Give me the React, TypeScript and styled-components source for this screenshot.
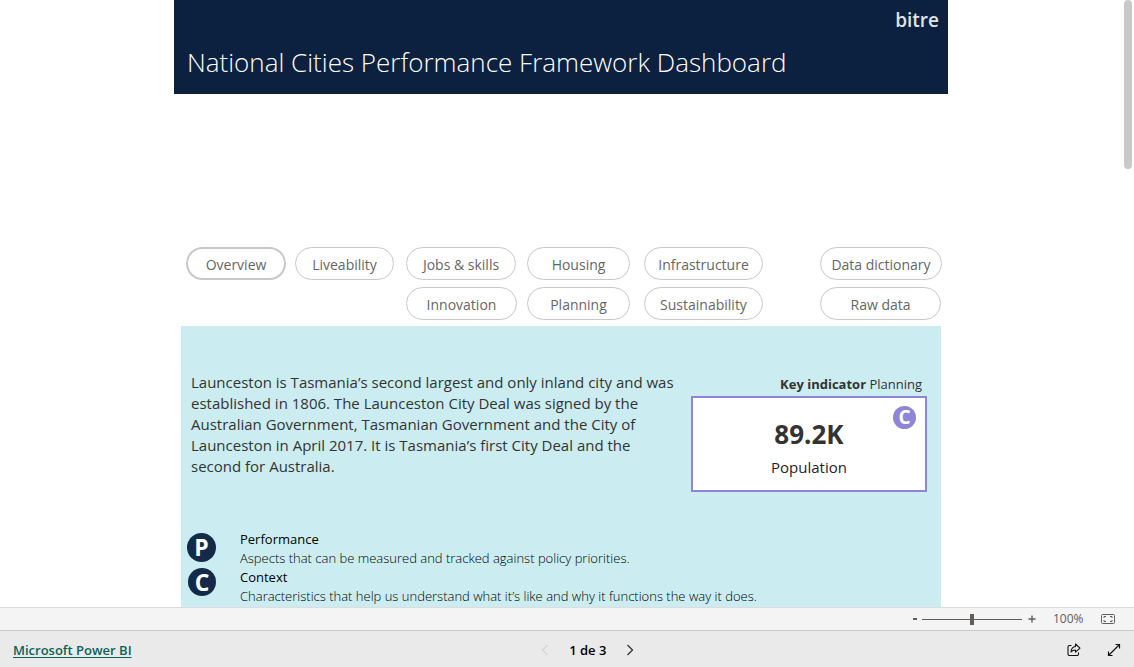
import React, { useState } from "react";
import styled, { createGlobalStyle } from "styled-components";

const GlobalStyle = createGlobalStyle`
  *, *::before, *::after { box-sizing: border-box; }
  body {
    margin: 0;
    background: #fff;
    color: #252423;
    font-family: "Open Sans", "Noto Sans", sans-serif;
  }
  button, input { font: inherit; }
  h1, p, dl, dt, dd { margin: 0; }
`;

const Shell = styled.div`
  display: flex;
  flex-direction: column;
  height: 100vh;
`;

const Viewport = styled.main`
  position: relative;
  flex: 1;
  min-height: 0;
  display: flex;
  overflow: hidden;
  padding-right: 12px;
`;

const ScrollThumb = styled.div`
  position: absolute;
  top: 0;
  right: 2px;
  width: 8px;
  height: 169px;
  border-radius: 4px;
  background: #c8c8c8;
`;

const Report = styled.div`
  display: flex;
  flex-direction: column;
  width: 100%;
  max-width: 774px;
  margin: 0 auto;
`;

const Banner = styled.header`
  display: flex;
  flex-direction: column;
  flex-shrink: 0;
  padding: 6px 9px 12px 13px;
  background: #0b213f;
  color: #fff;
`;

const Brand = styled.span`
  align-self: flex-end;
  font-size: 19px;
  line-height: 28px;
  font-weight: 600;
  color: #dfe3e9;
`;

const Title = styled.h1`
  padding-top: 8px;
  font-size: 26px;
  line-height: 40px;
  font-weight: 300;
`;

const Tabs = styled.nav`
  display: grid;
  grid-template-columns: 109fr 111fr 121fr 117fr 176fr 122fr;
  row-gap: 7px;
  flex-shrink: 0;
  padding: 153px 6px 6px 12px;
`;

const Tab = styled.button<{ $width: number; $column: number; $active?: boolean }>`
  grid-column: ${(p) => p.$column};
  width: ${(p) => p.$width}px;
  height: 33px;
  padding: 2px 0 0;
  border: ${(p) => (p.$active ? 2 : 1)}px solid #c8c8c8;
  border-radius: 17px;
  background: #fff;
  color: #666;
  font-size: 14px;
  line-height: 20px;
  white-space: nowrap;
`;

const Panel = styled.section`
  flex: 1;
  margin: 0 7px;
  padding: 46px 14px 0 6px;
  background: #cbedf2;
`;

const Summary = styled.div`
  display: flex;
  justify-content: space-between;
  padding-left: 4px;
`;

const Intro = styled.p`
  width: 492px;
  font-size: 15px;
  line-height: 21px;
  color: #333;
`;

const Indicator = styled.div`
  width: 236px;
`;

const IndicatorLabel = styled.p`
  padding-right: 5px;
  text-align: right;
  font-size: 13px;
  line-height: 24px;
  color: #333;
`;

const Card = styled.div`
  position: relative;
  display: flex;
  flex-direction: column;
  align-items: center;
  height: 96px;
  padding-top: 18px;
  border: 2px solid #8f85d6;
  background: #fff;
`;

const Value = styled.strong`
  font-size: 26px;
  line-height: 36px;
  color: #333;
`;

const Caption = styled.span`
  font-size: 15px;
  line-height: 30px;
  color: #252423;
`;

const Disc = styled.span<{ $size: number; $font: number; $fill: string }>`
  display: flex;
  align-items: center;
  justify-content: center;
  width: ${(p) => p.$size}px;
  height: ${(p) => p.$size}px;
  border-radius: 50%;
  background: ${(p) => p.$fill};
  color: #fff;
  font-size: ${(p) => p.$font}px;
  line-height: ${(p) => p.$size}px;
  font-weight: 700;
`;

const Badge = styled(Disc)`
  position: absolute;
  top: 8px;
  right: 9px;
`;

const Legend = styled.div`
  display: flex;
  gap: 24px;
  padding-top: 38px;
`;

const Markers = styled.div`
  display: flex;
  flex-direction: column;
  align-items: flex-end;
  gap: 6px;
  padding-top: 3px;
`;

const Terms = styled.dl`
  font-size: 13px;
  line-height: 19px;
  color: #000;
`;

const Term = styled.dt`
  font-weight: 400;
`;

const Meaning = styled.dd`
  font-weight: 300;
`;

const ZoomBar = styled.div`
  display: flex;
  align-items: center;
  justify-content: flex-end;
  flex-shrink: 0;
  height: 23px;
  padding-right: 18px;
  border-top: 1px solid #dcdcdc;
  background: #f4f4f4;
  color: #605e5c;
`;

const BareButton = styled.button`
  display: flex;
  align-items: center;
  justify-content: center;
  padding: 0;
  border: 0;
  background: none;
  color: inherit;
`;

const StepButton = styled(BareButton)`
  width: 14px;
  height: 22px;
`;

const Slider = styled.input`
  appearance: none;
  width: 100px;
  height: 12px;
  margin: 0 3px 0 0;
  background: linear-gradient(#605e5c, #605e5c) center / 100% 1px no-repeat;
  &::-webkit-slider-thumb {
    appearance: none;
    width: 4px;
    height: 11px;
    background: #605e5c;
  }
`;

const Percent = styled.output`
  width: 30px;
  margin: 0 17px 0 14px;
  font-size: 12px;
  line-height: 22px;
  white-space: nowrap;
`;

const Footer = styled.footer`
  display: flex;
  align-items: center;
  justify-content: space-between;
  flex-shrink: 0;
  height: 37px;
  padding: 2px 0 0 13px;
  border-top: 1px solid #c8c8c8;
  background: #eaeaea;
`;

const BrandLink = styled.a`
  font-size: 13px;
  line-height: 20px;
  font-weight: 600;
  color: #0b6258;
  text-underline-offset: 2px;
`;

const Pager = styled.div`
  display: flex;
  align-items: center;
  gap: 17px;
  font-size: 13px;
  line-height: 20px;
  font-weight: 600;
  color: #000;
`;

const PageButton = styled(BareButton)`
  width: 14px;
  height: 20px;
  color: #333;
  &:disabled { color: #c8c6c4; }
`;

const Actions = styled.div`
  display: flex;
  padding-left: 10px;
`;

const ActionButton = styled(BareButton)`
  width: 40px;
  height: 32px;
  color: #111;
`;

const tabs = [
  { label: "Overview", column: 1, width: 100, active: true },
  { label: "Liveability", column: 2, width: 99 },
  { label: "Jobs & skills", column: 3, width: 110 },
  { label: "Housing", column: 4, width: 103 },
  { label: "Infrastructure", column: 5, width: 119 },
  { label: "Data dictionary", column: 6, width: 122 },
  { label: "Innovation", column: 3, width: 111 },
  { label: "Planning", column: 4, width: 103 },
  { label: "Sustainability", column: 5, width: 119 },
  { label: "Raw data", column: 6, width: 121 },
];

export default function App() {
  const [zoom, setZoom] = useState(100);
  return (
    <Shell>
      <GlobalStyle />
      <Viewport>
        <Report>
          <Banner>
            <Brand>bitre</Brand>
            <Title>National Cities Performance Framework Dashboard</Title>
          </Banner>
          <Tabs aria-label="Report pages">
            {tabs.map((t) => (
              <Tab key={t.label} type="button" $column={t.column} $width={t.width} $active={t.active}>
                {t.label}
              </Tab>
            ))}
          </Tabs>
          <Panel>
            <Summary>
              <Intro>
                Launceston is Tasmania’s second largest and only inland city and was established in
                1806. The Launceston City Deal was signed by the Australian Government, Tasmanian
                Government and the City of Launceston in April 2017. It is Tasmania’s first City Deal
                and the second for Australia.
              </Intro>
              <Indicator>
                <IndicatorLabel>
                  <b>Key indicator</b> Planning
                </IndicatorLabel>
                <Card>
                  <Badge $size={23} $font={19} $fill="#8f85d6">
                    C
                  </Badge>
                  <Value>89.2K</Value>
                  <Caption>Population</Caption>
                </Card>
              </Indicator>
            </Summary>
            <Legend>
              <Markers>
                <Disc $size={29} $font={23} $fill="#132b49">
                  P
                </Disc>
                <Disc $size={28} $font={23} $fill="#132b49">
                  C
                </Disc>
              </Markers>
              <Terms>
                <Term>Performance</Term>
                <Meaning>Aspects that can be measured and tracked against policy priorities.</Meaning>
                <Term>Context</Term>
                <Meaning>
                  Characteristics that help us understand what it’s like and why it functions the way it
                  does.
                </Meaning>
              </Terms>
            </Legend>
          </Panel>
        </Report>
        <ScrollThumb aria-hidden="true" />
      </Viewport>
      <ZoomBar>
        <StepButton type="button" aria-label="Zoom out" onClick={() => setZoom(Math.max(10, zoom - 10))}>
          <svg width="14" height="14" viewBox="0 0 14 14" aria-hidden="true">
            <path d="M5 7h4" stroke="currentColor" strokeWidth="2" />
          </svg>
        </StepButton>
        <Slider
          type="range"
          aria-label="Zoom"
          min={10}
          max={190}
          value={zoom}
          onChange={(e) => setZoom(Number(e.target.value))}
        />
        <StepButton type="button" aria-label="Zoom in" onClick={() => setZoom(Math.min(190, zoom + 10))}>
          <svg width="14" height="14" viewBox="0 0 14 14" aria-hidden="true">
            <path d="M3.5 7h7M7 3.5v7" stroke="currentColor" strokeWidth="1.4" />
          </svg>
        </StepButton>
        <Percent>{zoom}%</Percent>
        <BareButton type="button" aria-label="Fit to page" onClick={() => setZoom(100)}>
          <svg width="16" height="12" viewBox="0 0 16 12" fill="none" stroke="currentColor" aria-hidden="true">
            <rect x="1.5" y="1.5" width="13" height="9" rx="1" />
            <path d="M4 5V3.5h2M10 3.5h2V5M12 7v1.5h-2M6 8.5H4V7" />
          </svg>
        </BareButton>
      </ZoomBar>
      <Footer>
        <BrandLink href="#powerbi">Microsoft Power BI</BrandLink>
        <Pager>
          <PageButton type="button" aria-label="Previous page" disabled>
            <svg width="14" height="14" viewBox="0 0 14 14" fill="none" stroke="currentColor" aria-hidden="true">
              <path d="M9.5 2l-5 5 5 5" />
            </svg>
          </PageButton>
          <span>1 de 3</span>
          <PageButton type="button" aria-label="Next page">
            <svg width="14" height="14" viewBox="0 0 14 14" fill="none" stroke="currentColor" strokeWidth="1.3" aria-hidden="true">
              <path d="M4.5 2l5 5-5 5" />
            </svg>
          </PageButton>
        </Pager>
        <Actions>
          <ActionButton type="button" aria-label="Share">
            <svg width="14" height="14" viewBox="0 0 14 14" fill="none" stroke="currentColor" strokeWidth="1.1" strokeLinejoin="round" aria-hidden="true">
              <path d="M4.5 2.5h-2A1.5 1.5 0 0 0 1 4v7a1.5 1.5 0 0 0 1.5 1.5H10a1.5 1.5 0 0 0 1.5-1.5V9.5" />
              <path d="M8.5 1l4.5 4.2-4.5 4V7C6.3 7 5 7.8 4 9c.2-3 1.7-5.2 4.5-5.5z" />
            </svg>
          </ActionButton>
          <ActionButton type="button" aria-label="Full screen">
            <svg width="14" height="14" viewBox="0 0 14 14" fill="none" stroke="currentColor" strokeWidth="1.2" aria-hidden="true">
              <path d="M1.5 12.5l11-11M8.5 1.5h4v4M5.5 12.5h-4v-4" />
            </svg>
          </ActionButton>
        </Actions>
      </Footer>
    </Shell>
  );
}
